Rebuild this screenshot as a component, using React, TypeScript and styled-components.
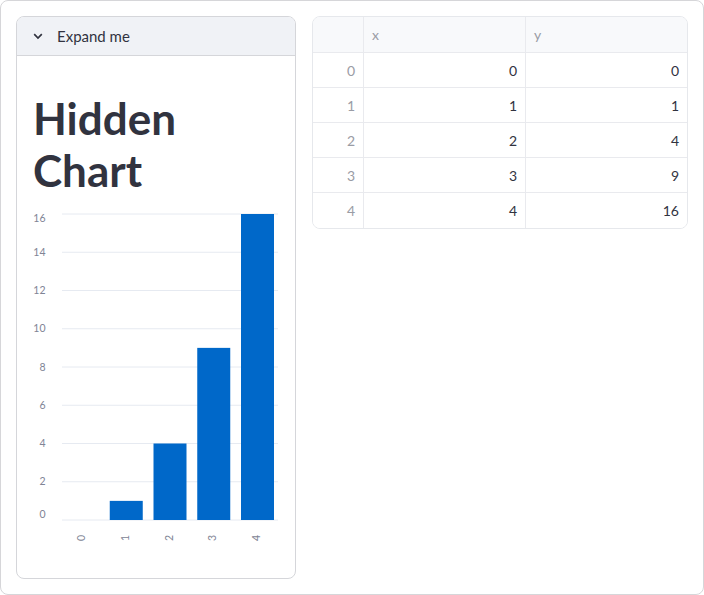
import React from "react";
import styled, { createGlobalStyle } from "styled-components";

const GlobalStyle = createGlobalStyle`
  html, body { margin: 0; padding: 0; background: #ffffff; }
  body { font-family: "Lato", "Noto Sans", sans-serif; color: #31333f; }
  * { box-sizing: border-box; }
`;

const Frame = styled.div`
  width: 704px;
  height: 595px;
  border: 1px solid #d6d6d9;
  border-radius: 8px;
  padding: 15px;
  display: flex;
  align-items: flex-start;
  gap: 16px;
`;

const Expander = styled.div`
  width: 280px;
  height: 563px;
  border: 1px solid #d5d6da;
  border-radius: 8px;
  overflow: hidden;
  display: flex;
  flex-direction: column;
`;

const ExpanderHeader = styled.div`
  height: 39px;
  flex-shrink: 0;
  background: #f0f2f6;
  border-bottom: 1px solid #d5d6da;
  display: flex;
  align-items: center;
  gap: 14px;
  padding-left: 16px;
  font-size: 15px;
  color: #31333f;
`;

const ExpanderBody = styled.div`
  padding: 16px 16px 0 16px;
  display: flex;
  flex-direction: column;
`;

const Heading = styled.h1`
  margin: 0;
  padding-top: 20px;
  font-size: 44px;
  line-height: 52px;
  font-weight: 700;
  color: #31333f;
`;

const ChartSvg = styled.svg`
  display: block;
  margin-top: 9px;
  font-family: "Lato", "Noto Sans", sans-serif;
`;

const Table = styled.div`
  width: 376px;
  border: 1px solid #e6e8ec;
  border-radius: 8px;
  overflow: hidden;
  display: grid;
  grid-template-columns: 51px 162px 1fr;
  font-size: 14px;
`;

const Cell = styled.div<{ $head?: boolean; $index?: boolean; $lastRow?: boolean; $lastCol?: boolean }>`
  height: ${(p) => (p.$head ? "36px" : "35px")};
  display: flex;
  align-items: center;
  justify-content: ${(p) => (p.$head ? "flex-start" : "flex-end")};
  padding: 0 8px;
  background: ${(p) => (p.$head ? "#f8f9fb" : "#ffffff")};
  color: ${(p) => (p.$head || p.$index ? "#9a9ca5" : "#31333f")};
  font-weight: 400;
  border-right: ${(p) => (p.$lastCol ? "none" : "1px solid #e9eaee")};
  border-bottom: ${(p) => (p.$lastRow ? "none" : "1px solid #e9eaee")};
`;

const data = [0, 1, 4, 9, 16];
const yTicks = [0, 2, 4, 6, 8, 10, 12, 14, 16];

const Chart: React.FC = () => {
  const base = 315;
  const unit = 19.125;
  const band = 43.75;
  return (
    <ChartSvg width={246} height={345} viewBox="0 0 246 345">
      {yTicks.map((t) => {
        const y = base - t * unit;
        const dy = t === 16 ? 8 : t === 0 ? -2 : 3.5;
        return (
          <g key={t}>
            <line x1={29} x2={245} y1={y} y2={y} stroke="#e6eaf1" strokeWidth={1} />
            <text x={12.5} y={y + dy} fontSize={10.5} fill="#808495" textAnchor="end">
              {t}
            </text>
          </g>
        );
      })}
      {data.map((v, i) => (
        <rect key={i} x={33 + band * i} y={base - v * unit} width={33} height={v * unit} fill="#0068c9" />
      ))}
      {data.map((_, i) => (
        <text
          key={i}
          transform={`translate(${49.5 + band * i}, 330) rotate(-90)`}
          fontSize={10.5}
          fill="#808495"
          textAnchor="end"
          dominantBaseline="middle"
        >
          {i}
        </text>
      ))}
    </ChartSvg>
  );
};

const App: React.FC = () => {
  return (
    <>
      <GlobalStyle />
      <Frame>
        <Expander>
          <ExpanderHeader>
            <svg width="10" height="7" viewBox="0 0 10 7">
              <path d="M1.2 1.2 L5 5 L8.8 1.2" fill="none" stroke="#31333f" strokeWidth="1.7" />
            </svg>
            Expand me
          </ExpanderHeader>
          <ExpanderBody>
            <Heading>
              Hidden
              <br />
              Chart
            </Heading>
            <Chart />
          </ExpanderBody>
        </Expander>
        <Table>
          <Cell $head />
          <Cell $head>x</Cell>
          <Cell $head $lastCol>y</Cell>
          {data.map((v, i) => (
            <React.Fragment key={i}>
              <Cell $index $lastRow={i === 4}>{i}</Cell>
              <Cell $lastRow={i === 4}>{i}</Cell>
              <Cell $lastRow={i === 4} $lastCol>{v}</Cell>
            </React.Fragment>
          ))}
        </Table>
      </Frame>
    </>
  );
};

export default App;
